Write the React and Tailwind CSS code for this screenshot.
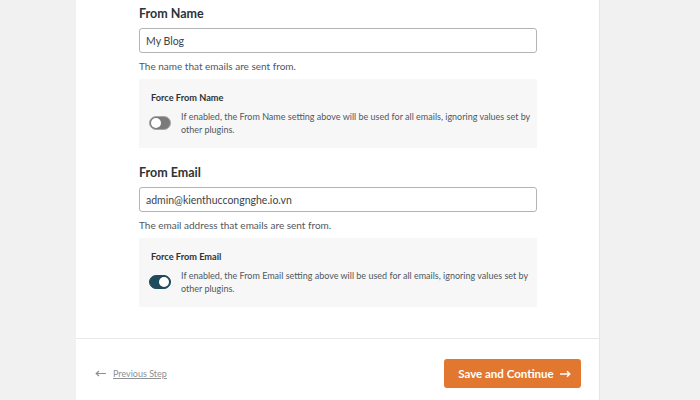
import { useState } from "react";

const font = { fontFamily: 'Lato, "Noto Sans", sans-serif' };

function Toggle({ on, onChange }) {
  return (
    <button
      type="button"
      onClick={onChange}
      className={`relative shrink-0 -ml-[2px] w-[22px] h-[14px] rounded-full border ${
        on ? "bg-[#1f4b5c] border-[#1f4b5c]" : "bg-[#7a7a7a] border-[#a7a7a7]"
      }`}
    >
      <span
        className={`absolute top-[1px] w-[10px] h-[10px] rounded-full bg-white ${
          on ? "left-[9px]" : "left-[1px]"
        }`}
      />
    </button>
  );
}

function Field({ label, value, help, forceTitle, forceText, on, onToggle }) {
  return (
    <div>
      <h3 className="text-[12.5px] leading-[18px] font-bold text-[#2c3338]">{label}</h3>
      <input
        defaultValue={value}
        className="mt-[5px] block w-full h-[25px] px-[6px] text-[10.5px] text-[#3c434a] border border-[#b4b4b4] rounded-[3px] bg-white outline-none"
      />
      <p className="mt-[6px] text-[10px] leading-[14px] text-[#50575e]">{help}</p>
      <div className="mt-[6px] bg-[#f7f7f7] pl-[12px] pt-[12px] pb-[12px]">
        <h4 className="text-[9.2px] leading-[14px] font-bold text-[#2c3338]">{forceTitle}</h4>
        <div className="mt-[5px] flex items-center gap-[10px]">
          <Toggle on={on} onChange={onToggle} />
          <p className="text-[9px] leading-[13px] text-[#50575e]">{forceText}</p>
        </div>
      </div>
    </div>
  );
}

function ArrowLeft() {
  return (
    <svg width="11" height="7" viewBox="0 0 11 7" className="shrink-0">
      <path d="M11 3.5H1.5M4 1L1.2 3.5L4 6" fill="none" stroke="currentColor" strokeWidth="1.2" />
    </svg>
  );
}

function ArrowRight() {
  return (
    <svg width="11" height="8" viewBox="0 0 11 8" className="shrink-0">
      <path d="M0 4H9.5M7 1.2L9.8 4L7 6.8" fill="none" stroke="currentColor" strokeWidth="1.4" />
    </svg>
  );
}

export default function App() {
  const [forceName, setForceName] = useState(false);
  const [forceEmail, setForceEmail] = useState(true);

  return (
    <div style={font} className="h-[400px] overflow-hidden bg-[#f1f1f1]">
      <div className="ml-[76px] w-[524px] h-full bg-white border-r border-[#e6e6e6]">
        <div className="pt-[5px] pl-[63px] pr-[62px] pb-[31px] flex flex-col gap-[16px]">
          <Field
            label="From Name"
            value="My Blog"
            help="The name that emails are sent from."
            forceTitle="Force From Name"
            forceText="If enabled, the From Name setting above will be used for all emails, ignoring values set by other plugins."
            on={forceName}
            onToggle={() => setForceName(!forceName)}
          />
          <Field
            label="From Email"
            value="admin@kienthuccongnghe.io.vn"
            help="The email address that emails are sent from."
            forceTitle="Force From Email"
            forceText="If enabled, the From Email setting above will be used for all emails, ignoring values set by other plugins."
            on={forceEmail}
            onToggle={() => setForceEmail(!forceEmail)}
          />
        </div>
        <div className="border-t border-[#e8e8e8] pt-[20px] pl-[19px] pr-[18px] flex items-center justify-between">
          <a href="#" className="flex items-center gap-[7px] text-[9px] text-[#8c8f94]">
            <ArrowLeft />
            <span className="underline">Previous Step</span>
          </a>
          <button className="h-[29px] w-[137px] pl-[4px] rounded-[3px] bg-[#e27730] text-white text-[11.5px] font-bold flex items-center justify-center gap-[6px]">
            Save and Continue
            <ArrowRight />
          </button>
        </div>
      </div>
    </div>
  );
}
